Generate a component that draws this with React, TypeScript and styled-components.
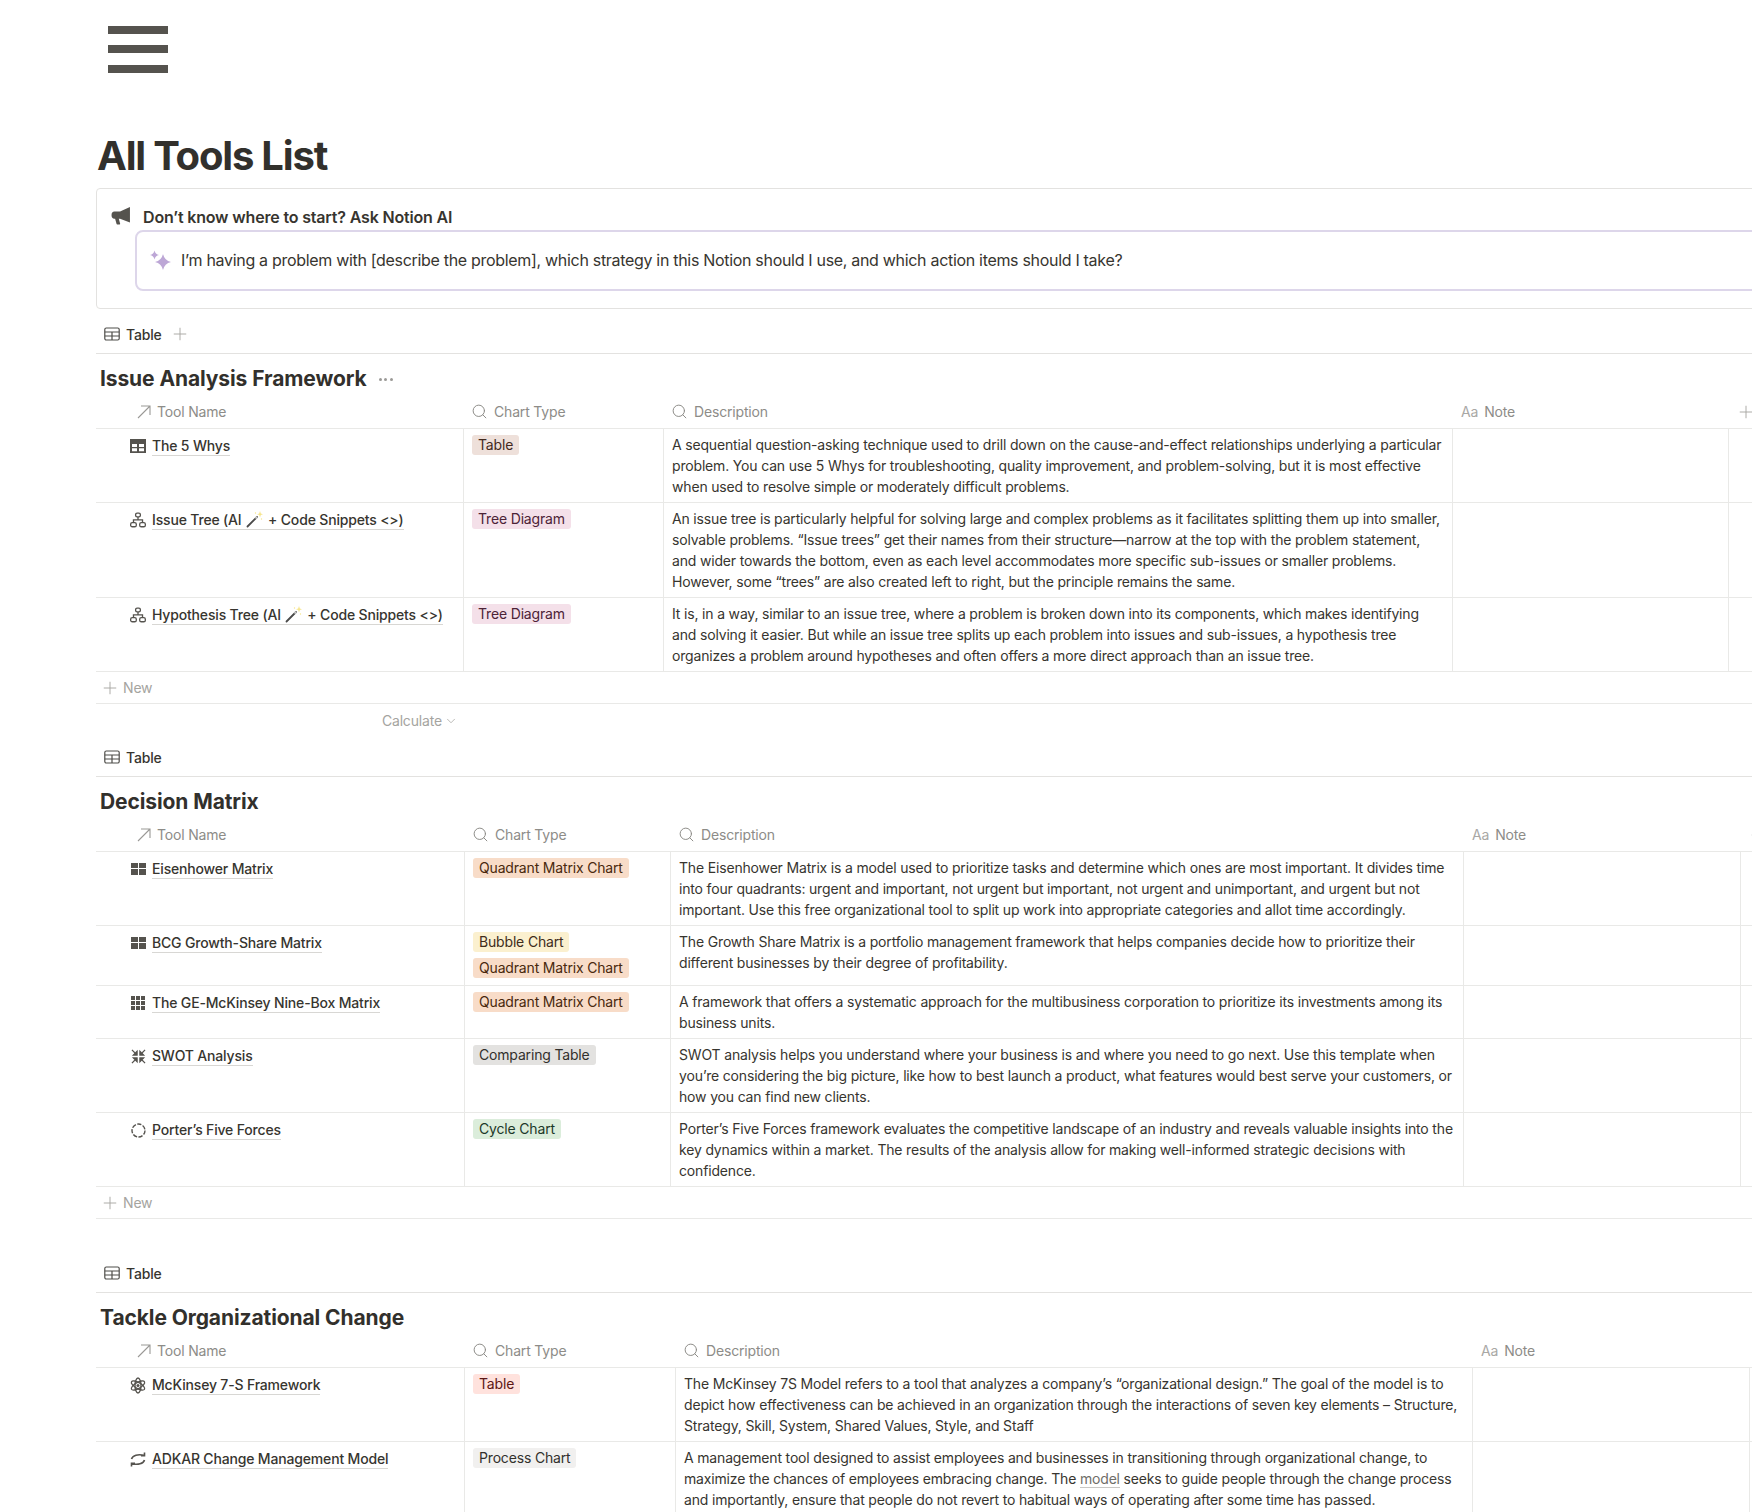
import React from "react";
import styled, { createGlobalStyle } from "styled-components";
import { ChevronDown, Plus, Search } from "lucide-react";

type TagTone = "brown" | "pink" | "orange" | "yellow" | "gray" | "green" | "red" | "plain";

type ToolRow = {
  icon: React.ReactNode;
  name: React.ReactNode;
  tags: { label: string; tone: TagTone }[];
  lines: React.ReactNode[];
};

const toneColors: Record<TagTone, [string, string]> = {
  brown: ["#eee0da", "#442a1e"],
  pink: ["#f4e0e9", "#4c2337"],
  orange: ["#f8dcc8", "#49290e"],
  yellow: ["#fbf0cf", "#402c1b"],
  gray: ["#e3e2e0", "#32302c"],
  green: ["#dbeddb", "#1c3829"],
  red: ["#ffe2dd", "#5d1715"],
  plain: ["#f1f0ef", "#32302c"],
};

const GlobalStyle = createGlobalStyle`
  html, body {
    margin: 0;
    padding: 0;
    background: #fff;
    overflow: hidden;
  }
  body {
    font-family: Inter, "Liberation Sans", sans-serif;
    color: #37352f;
    letter-spacing: -0.17px;
    -webkit-font-smoothing: antialiased;
  }
`;

const Viewport = styled.div`
  width: 1752px;
  height: 1512px;
  overflow: hidden;
`;

const Page = styled.div`
  width: 1900px;
  padding-left: 96px;
  box-sizing: border-box;
`;

const PageIcon = styled.svg`
  display: block;
  width: 60px;
  height: 47px;
  margin: 26px 0 0 12px;
`;

const Title = styled.h1`
  margin: 59px 0 0;
  padding-left: 1px;
  font-size: 40px;
  line-height: 48px;
  font-weight: 700;
  letter-spacing: -1.2px;
  color: #32302c;
`;

const Callout = styled.div`
  margin-top: 8px;
  height: 121px;
  box-sizing: border-box;
  padding: 14px 0 0 14px;
  border: 1px solid #e3e2e0;
  border-radius: 4px;
  display: flex;
  gap: 12px;
`;

const CalloutBody = styled.div`
  flex: 1;
  display: flex;
  flex-direction: column;
`;

const CalloutTitle = styled.div`
  font-size: 16px;
  line-height: 24px;
  margin-top: 2px;
  font-weight: 600;
  color: #37352f;
`;

const Prompt = styled.div`
  margin: 1px 0 0 -8px;
  height: 61px;
  box-sizing: border-box;
  border: 2px solid #ddd6ea;
  border-radius: 8px;
  display: flex;
  align-items: center;
  gap: 10px;
  padding: 0 0 2px 13px;
  font-size: 16px;
  letter-spacing: -0.31px;
  color: #37352f;
`;

const TabRow = styled.div<{ $gap: number }>`
  margin-top: ${({ $gap }) => $gap}px;
  height: 37px;
  box-sizing: border-box;
  padding: 0 0 2px 8px;
  border-bottom: 1px solid #e3e2e0;
  display: flex;
  align-items: center;
  font-size: 14px;
  font-weight: 500;
  color: #37352f;
`;

const TabLabel = styled.span`
  margin-left: 6px;
`;

const TabAdd = styled.span`
  display: flex;
  margin-left: 8px;
  color: #a5a4a0;
`;

const TableTitle = styled.div`
  height: 41px;
  box-sizing: border-box;
  padding: 9px 0 0 4px;
  display: flex;
  align-items: flex-start;
  gap: 12px;
  font-size: 21px;
  line-height: 31px;
  font-weight: 700;
  letter-spacing: -0.1px;
  color: #32302c;
`;

const Dots = styled.span`
  display: flex;
  gap: 2.5px;
  margin-top: 15px;
`;

const Dot = styled.i`
  width: 3px;
  height: 3px;
  border-radius: 50%;
  background: #9b9a97;
`;

const Grid = styled.div<{ $cols: string }>`
  display: grid;
  grid-template-columns: ${({ $cols }) => $cols};
  border-bottom: 1px solid #e9e9e7;
`;

const HeaderCell = styled.div<{ $inset?: number }>`
  height: 33px;
  display: flex;
  align-items: center;
  gap: 6px;
  padding-left: ${({ $inset }) => $inset ?? 8}px;
  font-size: 14px;
  color: #8d8c88;
`;

const SearchMark = styled(Search)`
  margin-left: -1px;
`;

const AaMark = styled.span`
  font-size: 14px;
  color: #a9a8a5;
`;

const AddColumn = styled.span`
  display: flex;
  margin-left: -1px;
  color: #a5a4a0;
`;

const Cell = styled.div<{ $plain?: boolean }>`
  box-sizing: border-box;
  border-right: ${({ $plain }) => ($plain ? "none" : "1px solid #e9e9e7")};
`;

const NameCell = styled(Cell)`
  display: flex;
  align-items: flex-start;
  gap: 6px;
  padding: 8px 0 0 34px;
  font-size: 14px;
  line-height: 18px;
`;

const IconSlot = styled.span`
  flex: none;
  width: 16px;
  height: 18px;
  display: flex;
  align-items: center;
  justify-content: center;
  color: #55534e;
`;

const NameLink = styled.span`
  font-weight: 500;
  color: #37352f;
  border-bottom: 1px solid #d8d7d4;
  display: inline-flex;
  align-items: center;
  white-space: pre;
`;

const TagCell = styled(Cell)`
  display: flex;
  flex-direction: column;
  align-items: flex-start;
  gap: 6px;
  padding: 6px 0 7px 8px;
`;

const Tag = styled.span<{ $tone: TagTone }>`
  height: 20px;
  padding: 0 6px;
  border-radius: 3px;
  font-size: 14px;
  line-height: 20px;
  white-space: nowrap;
  background: ${({ $tone }) => toneColors[$tone][0]};
  color: ${({ $tone }) => toneColors[$tone][1]};
`;

const TextCell = styled(Cell)`
  padding: 5px 0 5px 8px;
  font-size: 14px;
  line-height: 21px;
  color: #37352f;
`;

const Line = styled.span`
  display: block;
  white-space: nowrap;
`;

const SoftLink = styled.span`
  color: #6f6e69;
  border-bottom: 1px solid #c9c8c5;
`;

const NewRow = styled.div`
  height: 31px;
  border-bottom: 1px solid #e9e9e7;
  display: flex;
  align-items: center;
  gap: 3px;
  padding-left: 4px;
  font-size: 14px;
  color: #a5a4a0;
`;

const CalculateRow = styled.div`
  width: 368px;
  height: 36px;
  box-sizing: border-box;
  padding: 0 6px 3px 0;
  display: flex;
  align-items: center;
  justify-content: flex-end;
  gap: 2px;
  font-size: 14px;
  color: #a5a4a0;
`;

const MegaphoneIcon = () => (
  <svg width="20" height="20" viewBox="0 0 19 18" style={{ flex: "none", marginTop: 3 }}>
    <path
      fill="#55534e"
      d="M18 .5v14.6l-9.4-3.4H7.400l1.300 4.600c.1.400-.2.700-.6.700H5.900c-.3 0-.5-.2-.6-.4L3.900 11.500H3.200C1.500 11.500.5 10.200.5 8.200c0-2.100 1-3.400 2.700-3.400h5.400L18 .5z"
    />
  </svg>
);

const SparkleIcon = () => (
  <svg width="21" height="21" viewBox="0 0 21 21" style={{ flex: "none" }}>
    <path fill="#bda7d6" d="M13 5Q14.500 11.500 21 13 14.500 14.500 13 21 11.500 14.500 5 13 11.500 11.500 13 5z" />
    <path fill="#bda7d6" d="M4.500 1.500Q5.300 5.200 9 6 5.300 6.800 4.500 10.500 3.700 6.800 0 6 3.700 5.200 4.500 1.500z" />
  </svg>
);

const TabTableIcon = () => (
  <svg width="16" height="14" viewBox="0 0 16 14" fill="none" stroke="#4f4e4a" strokeWidth="1.200">
    <rect x="0.800" y="1" width="14.400" height="12" rx="1.500" />
    <path d="M.8 5h14.400M.8 9h14.400M8 5v8" />
  </svg>
);

const ArrowMark = () => (
  <svg width="14" height="14" viewBox="0 0 14 14" fill="none" stroke="#9a9996" strokeWidth="1.100" style={{ flex: "none" }}>
    <path d="M1 13L13 1M4 1h9v9" />
  </svg>
);

const FilledTableIcon = () => (
  <svg width="16" height="14" viewBox="0 0 16 14">
    <path
      fill="#55534e"
      fillRule="evenodd"
      d="M0 0h16v14H0zM2 5v3h5V5zM9 5v3h5V5zM2 9.200v3h5v-3zM9 9.200v3h5v-3z"
    />
  </svg>
);

const TreeIcon = () => (
  <svg width="17" height="16" viewBox="0 0 17 16" fill="none" stroke="#55534e" strokeWidth="1.400">
    <rect x="6" y="0.700" width="5" height="4" rx="1.500" />
    <rect x="0.700" y="10.800" width="6" height="4.400" rx="1.700" />
    <rect x="10.300" y="10.800" width="6" height="4.400" rx="1.700" />
    <path d="M8.500 4.700v3.200M3.700 10.800V7.900h9.600v2.900" />
  </svg>
);

const QuadIcon = () => (
  <svg width="15" height="12" viewBox="0 0 15 12" fill="#55534e">
    <rect width="7" height="5" />
    <rect x="8" width="7" height="5" />
    <rect y="6" width="7" height="6" />
    <rect x="8" y="6" width="7" height="6" />
  </svg>
);

const NineBoxIcon = () => (
  <svg width="14" height="14" viewBox="0 0 14 14" fill="#55534e">
    {[0, 5, 10].map((y) =>
      [0, 5, 10].map((x) => <rect key={`${x}-${y}`} x={x} y={y} width="4" height="4" />)
    )}
  </svg>
);

const InwardIcon = () => (
  <svg width="15" height="15" viewBox="0 0 16 16" fill="#55534e" stroke="#55534e" strokeWidth="1.300">
    <path d="M1 1l3 3M6.500 6.500H2.500l4-4zM15 1l-3 3M9.500 6.500h4l-4-4zM1 15l3-3M6.500 9.500H2.500l4 4zM15 15l-3-3M9.500 9.500h4l-4 4z" />
  </svg>
);

const DashedCircleIcon = () => (
  <svg width="15" height="15" viewBox="0 0 15 15" fill="none" stroke="#55534e" strokeWidth="1.400">
    <circle cx="7.500" cy="7.500" r="6.500" strokeDasharray="4.300 1.400" />
  </svg>
);

const AtomIcon = () => (
  <svg width="16" height="17" viewBox="0 0 16 17" fill="none" stroke="#55534e" strokeWidth="1.300">
    <ellipse cx="8" cy="8.500" rx="3" ry="7.500" />
    <ellipse cx="8" cy="8.500" rx="3" ry="7.500" transform="rotate(60 8 8.500)" />
    <ellipse cx="8" cy="8.500" rx="3" ry="7.500" transform="rotate(120 8 8.500)" />
    <circle cx="8" cy="8.500" r="1.500" fill="#55534e" stroke="none" />
  </svg>
);

const SwapIcon = () => (
  <svg width="16" height="15" viewBox="0 0 16 15" fill="none" stroke="#55534e" strokeWidth="1.600">
    <path d="M1.500 7C2.500 3.500 8 1.500 14.500 3.500M14.500.5v3.300h-3.500" />
    <path d="M14.500 8C13.500 11.500 8 13.500 1.500 11.500M1.500 14.500v-3.300h3.500" />
  </svg>
);

const WandIcon = () => (
  <svg width="18" height="18" viewBox="0 0 18 18" style={{ margin: "-2px 4px 0 1px" }}>
    <path d="M1.500 16.500L11 7" stroke="#4a4a4a" strokeWidth="1.800" strokeLinecap="round" />
    <path d="M9.500 8.500L11 7" stroke="#c9c9c9" strokeWidth="1.800" />
    <path fill="#f6e58d" d="M14 1l.8 2.400 2.200.8-2.200.8-.8 2.400-.8-2.400-2.200-.8 2.200-.8z" />
    <circle cx="9.500" cy="3" r=".7" fill="#f6e58d" />
    <circle cx="15.500" cy="9" r=".7" fill="#f6e58d" />
  </svg>
);

const WandName: React.FC<{ before: string }> = ({ before }) => (
  <>
    {before}
    <WandIcon />
    {"+ Code Snippets <>)"}
  </>
);

type Section = {
  title: string;
  cols: string;
  showDots?: boolean;
  showAdd?: boolean;
  gap: number;
  tabAdd?: boolean;
  calculate?: boolean;
  rows: ToolRow[];
  hideNew?: boolean;
};

const sections: Section[] = [
  {
    title: "Issue Analysis Framework",
    cols: "368px 200px 789px 276px 1fr",
    showDots: true,
    showAdd: true,
    gap: 8,
    tabAdd: true,
    calculate: true,
    rows: [
      {
        icon: <FilledTableIcon />,
        name: "The 5 Whys",
        tags: [{ label: "Table", tone: "brown" }],
        lines: [
          "A sequential question-asking technique used to drill down on the cause-and-effect relationships underlying a particular",
          "problem. You can use 5 Whys for troubleshooting, quality improvement, and problem-solving, but it is most effective",
          "when used to resolve simple or moderately difficult problems.",
        ],
      },
      {
        icon: <TreeIcon />,
        name: <WandName before="Issue Tree (AI " />,
        tags: [{ label: "Tree Diagram", tone: "pink" }],
        lines: [
          "An issue tree is particularly helpful for solving large and complex problems as it facilitates splitting them up into smaller,",
          "solvable problems. “Issue trees” get their names from their structure—narrow at the top with the problem statement,",
          "and wider towards the bottom, even as each level accommodates more specific sub-issues or smaller problems.",
          "However, some “trees” are also created left to right, but the principle remains the same.",
        ],
      },
      {
        icon: <TreeIcon />,
        name: <WandName before="Hypothesis Tree (AI " />,
        tags: [{ label: "Tree Diagram", tone: "pink" }],
        lines: [
          "It is, in a way, similar to an issue tree, where a problem is broken down into its components, which makes identifying",
          "and solving it easier. But while an issue tree splits up each problem into issues and sub-issues, a hypothesis tree",
          "organizes a problem around hypotheses and often offers a more direct approach than an issue tree.",
        ],
      },
    ],
  },
  {
    title: "Decision Matrix",
    cols: "369px 206px 793px 277px 1fr",
    showAdd: true,
    gap: 0,
    rows: [
      {
        icon: <QuadIcon />,
        name: "Eisenhower Matrix",
        tags: [{ label: "Quadrant Matrix Chart", tone: "orange" }],
        lines: [
          "The Eisenhower Matrix is a model used to prioritize tasks and determine which ones are most important. It divides time",
          "into four quadrants: urgent and important, not urgent but important, not urgent and unimportant, and urgent but not",
          "important. Use this free organizational tool to split up work into appropriate categories and allot time accordingly.",
        ],
      },
      {
        icon: <QuadIcon />,
        name: "BCG Growth-Share Matrix",
        tags: [
          { label: "Bubble Chart", tone: "yellow" },
          { label: "Quadrant Matrix Chart", tone: "orange" },
        ],
        lines: [
          "The Growth Share Matrix is a portfolio management framework that helps companies decide how to prioritize their",
          "different businesses by their degree of profitability.",
        ],
      },
      {
        icon: <NineBoxIcon />,
        name: "The GE-McKinsey Nine-Box Matrix",
        tags: [{ label: "Quadrant Matrix Chart", tone: "orange" }],
        lines: [
          "A framework that offers a systematic approach for the multibusiness corporation to prioritize its investments among its",
          "business units.",
        ],
      },
      {
        icon: <InwardIcon />,
        name: "SWOT Analysis",
        tags: [{ label: "Comparing Table", tone: "gray" }],
        lines: [
          "SWOT analysis helps you understand where your business is and where you need to go next. Use this template when",
          "you’re considering the big picture, like how to best launch a product, what features would best serve your customers, or",
          "how you can find new clients.",
        ],
      },
      {
        icon: <DashedCircleIcon />,
        name: "Porter’s Five Forces",
        tags: [{ label: "Cycle Chart", tone: "green" }],
        lines: [
          "Porter’s Five Forces framework evaluates the competitive landscape of an industry and reveals valuable insights into the",
          "key dynamics within a market. The results of the analysis allow for making well-informed strategic decisions with",
          "confidence.",
        ],
      },
    ],
  },
  {
    title: "Tackle Organizational Change",
    cols: "369px 211px 797px 277px 1fr",
    gap: 37,
    hideNew: true,
    rows: [
      {
        icon: <AtomIcon />,
        name: "McKinsey 7-S Framework",
        tags: [{ label: "Table", tone: "red" }],
        lines: [
          "The McKinsey 7S Model refers to a tool that analyzes a company’s “organizational design.” The goal of the model is to",
          "depict how effectiveness can be achieved in an organization through the interactions of seven key elements – Structure,",
          "Strategy, Skill, System, Shared Values, Style, and Staff",
        ],
      },
      {
        icon: <SwapIcon />,
        name: "ADKAR Change Management Model",
        tags: [{ label: "Process Chart", tone: "plain" }],
        lines: [
          "A management tool designed to assist employees and businesses in transitioning through organizational change, to",
          <>
            maximize the chances of employees embracing change. The <SoftLink>model</SoftLink> seeks to guide people through the change process
          </>,
          "and importantly, ensure that people do not revert to habitual ways of operating after some time has passed.",
        ],
      },
    ],
  },
];

const TableSection: React.FC<{ section: Section }> = ({ section }) => (
  <section>
    <TabRow $gap={section.gap}>
      <TabTableIcon />
      <TabLabel>Table</TabLabel>
      {section.tabAdd && (
        <TabAdd>
          <Plus size={20} strokeWidth={1.1} />
        </TabAdd>
      )}
    </TabRow>
    <TableTitle>
      {section.title}
      {section.showDots && (
        <Dots>
          <Dot />
          <Dot />
          <Dot />
        </Dots>
      )}
    </TableTitle>
    <Grid $cols={section.cols}>
      <HeaderCell $inset={41}>
        <ArrowMark />
        Tool Name
      </HeaderCell>
      <HeaderCell>
        <SearchMark size={17} strokeWidth={1.4} color="#8d8c88" />
        Chart Type
      </HeaderCell>
      <HeaderCell>
        <SearchMark size={17} strokeWidth={1.4} color="#8d8c88" />
        Description
      </HeaderCell>
      <HeaderCell>
        <AaMark>Aa</AaMark>
        Note
      </HeaderCell>
      <HeaderCell>
        {section.showAdd && (
          <AddColumn>
            <Plus size={20} strokeWidth={1.1} />
          </AddColumn>
        )}
      </HeaderCell>
    </Grid>
    {section.rows.map((row, index) => (
      <Grid key={index} $cols={section.cols}>
        <NameCell>
          <IconSlot>{row.icon}</IconSlot>
          <NameLink>{row.name}</NameLink>
        </NameCell>
        <TagCell>
          {row.tags.map((tag) => (
            <Tag key={tag.label} $tone={tag.tone}>
              {tag.label}
            </Tag>
          ))}
        </TagCell>
        <TextCell>
          {row.lines.map((line, lineIndex) => (
            <Line key={lineIndex}>{line}</Line>
          ))}
        </TextCell>
        <Cell />
        <Cell $plain />
      </Grid>
    ))}
    {!section.hideNew && (
      <NewRow>
        <Plus size={20} strokeWidth={1.1} />
        New
      </NewRow>
    )}
    {section.calculate && (
      <CalculateRow>
        Calculate
        <ChevronDown size={14} strokeWidth={1.3} />
      </CalculateRow>
    )}
  </section>
);

const App: React.FC = () => (
  <Viewport>
    <GlobalStyle />
    <Page>
      <PageIcon viewBox="0 0 60 47" fill="#55534e">
        <rect width="60" height="8" />
        <rect y="19" width="60" height="8" />
        <rect y="39" width="60" height="8" />
      </PageIcon>
      <Title>All Tools List</Title>
      <Callout>
        <MegaphoneIcon />
        <CalloutBody>
          <CalloutTitle>Don’t know where to start? Ask Notion AI</CalloutTitle>
          <Prompt>
            <SparkleIcon />
            I’m having a problem with [describe the problem], which strategy in this Notion should I use, and which action items should I take?
          </Prompt>
        </CalloutBody>
      </Callout>
      {sections.map((section) => (
        <TableSection key={section.title} section={section} />
      ))}
    </Page>
  </Viewport>
);

export default App;
